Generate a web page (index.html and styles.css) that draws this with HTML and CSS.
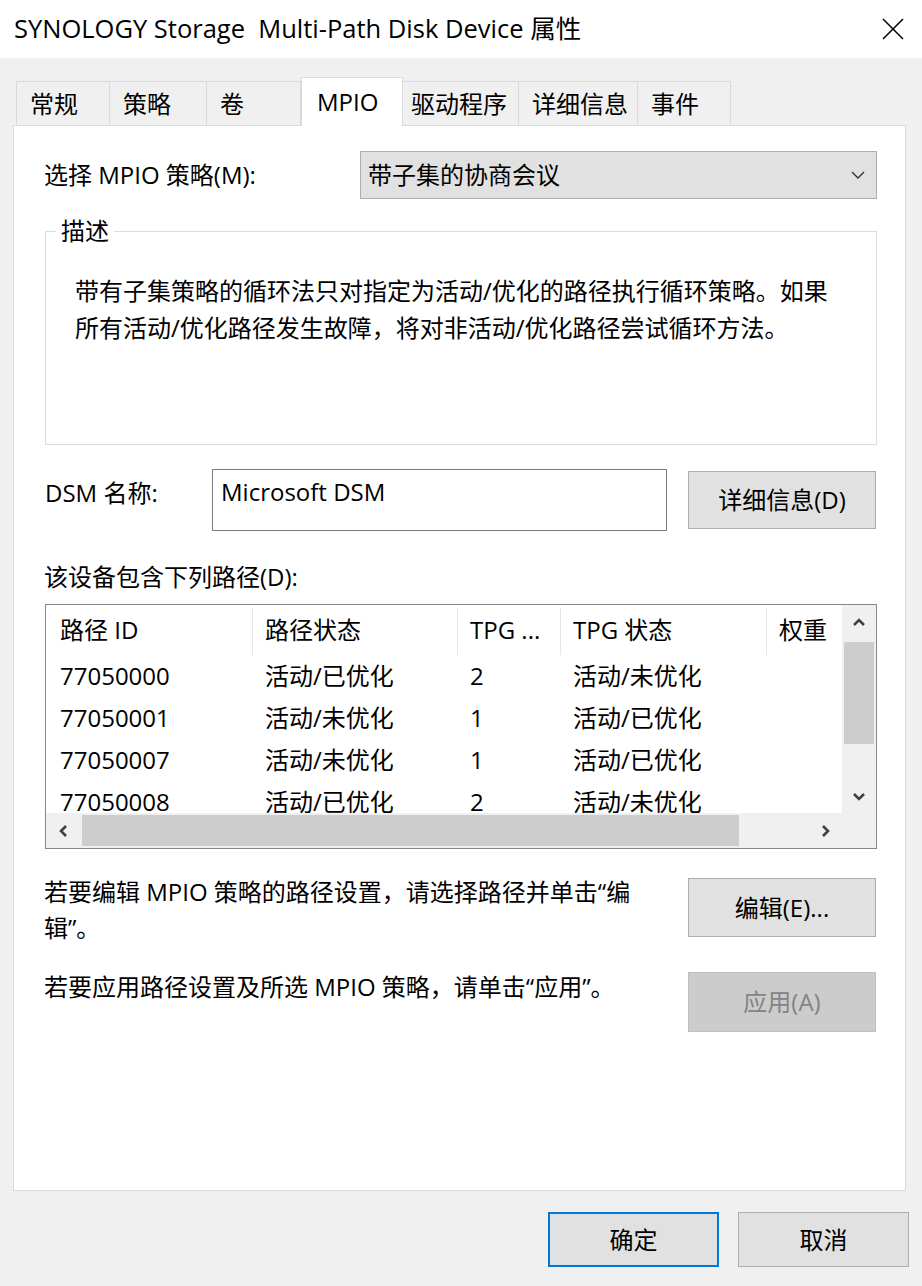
FILE: index.html
```html
<!DOCTYPE html>
<html lang="zh-CN">
<head>
<meta charset="utf-8">
<title>SYNOLOGY Storage Multi-Path Disk Device 属性</title>
<link rel="stylesheet" href="styles.css">
</head>
<body>
<div class="window">
  <header class="titlebar">
    <span class="title">SYNOLOGY Storage&nbsp; Multi-Path Disk Device 属性</span>
    <svg class="close" width="22" height="22" viewBox="0 0 22 22"><path d="M1 1L21 21M21 1L1 21" stroke="#000" stroke-width="1.5" fill="none"/></svg>
  </header>

  <div class="client">
    <nav class="tabs">
      <div class="tab">常规</div>
      <div class="tab">策略</div>
      <div class="tab">卷</div>
      <div class="tab active">MPIO</div>
      <div class="tab tight">驱动程序</div>
      <div class="tab">详细信息</div>
      <div class="tab">事件</div>
    </nav>

    <section class="panel">
      <div class="policy-row">
        <span class="label">选择 MPIO 策略(M):</span>
        <div class="select">
          <span>带子集的协商会议</span>
          <svg width="14" height="8" viewBox="0 0 14 8"><polyline points="1,1 7,7 13,1" fill="none" stroke="#333" stroke-width="1.4"/></svg>
        </div>
      </div>

      <fieldset class="group">
        <legend>描述</legend>
        <p class="desc">带有子集策略的循环法只对指定为活动/优化的路径执行循环策略。如果所有活动/优化路径发生故障，将对非活动/优化路径尝试循环方法。</p>
      </fieldset>

      <div class="dsm-row">
        <span class="label dsm-label">DSM 名称:</span>
        <div class="textbox">Microsoft DSM</div>
        <button class="btn side-btn details-btn">详细信息(D)</button>
      </div>

      <div class="label list-label">该设备包含下列路径(D):</div>

      <div class="listview">
        <div class="lv-main">
          <div class="lv-rows">
            <div class="lv-head">
              <div class="hc">路径 ID</div>
              <div class="hc">路径状态</div>
              <div class="hc">TPG ...</div>
              <div class="hc">TPG 状态</div>
              <div class="hc last">权重</div>
            </div>
            <div class="lv-row"><div>77050000</div><div>活动/已优化</div><div>2</div><div>活动/未优化</div><div></div></div>
            <div class="lv-row"><div>77050001</div><div>活动/未优化</div><div>1</div><div>活动/已优化</div><div></div></div>
            <div class="lv-row"><div>77050007</div><div>活动/未优化</div><div>1</div><div>活动/已优化</div><div></div></div>
            <div class="lv-row"><div>77050008</div><div>活动/已优化</div><div>2</div><div>活动/未优化</div><div></div></div>
          </div>
          <div class="vscroll">
            <div class="arrow"><svg width="14" height="9" viewBox="0 0 14 9"><polyline points="2,7 7,2 12,7" fill="none" stroke="#404040" stroke-width="2.6"/></svg></div>
            <div class="vthumb"></div>
            <div class="spacer"></div>
            <div class="arrow"><svg width="14" height="9" viewBox="0 0 14 9"><polyline points="2,2 7,7 12,2" fill="none" stroke="#404040" stroke-width="2.6"/></svg></div>
          </div>
        </div>
        <div class="hscroll">
          <div class="arrow"><svg width="9" height="14" viewBox="0 0 9 14"><polyline points="7,2 2,7 7,12" fill="none" stroke="#404040" stroke-width="2.6"/></svg></div>
          <div class="hthumb"></div>
          <div class="spacer"></div>
          <div class="arrow"><svg width="9" height="14" viewBox="0 0 9 14"><polyline points="2,2 7,7 2,12" fill="none" stroke="#404040" stroke-width="2.6"/></svg></div>
          <div class="corner"></div>
        </div>
      </div>

      <div class="action-row edit-row">
        <p class="note">若要编辑 MPIO 策略的路径设置，请选择路径并单击“编<br>辑”。</p>
        <button class="btn side-btn edit-btn">编辑(E)...</button>
      </div>

      <div class="action-row apply-row">
        <p class="note">若要应用路径设置及所选 MPIO 策略，请单击“应用”。</p>
        <button class="btn side-btn apply-btn" disabled>应用(A)</button>
      </div>
    </section>
  </div>

  <footer class="footer">
    <button class="btn foot-btn default">确定</button>
    <button class="btn foot-btn">取消</button>
  </footer>
</div>
</body>
</html>
```

FILE: styles.css
```css
* { box-sizing: border-box; }

html, body {
  margin: 0;
  padding: 0;
}

body {
  width: 922px;
  height: 1286px;
  overflow: hidden;
  background: #f0f0f0;
  color: #000;
  font-family: "Open Sans", "Noto Sans CJK SC", sans-serif;
  font-size: 24px;
  line-height: 36px;
}

.titlebar {
  height: 58px;
  background: #fff;
  display: flex;
  align-items: center;
  justify-content: space-between;
  padding: 0 18px 0 14px;
}

.title {
  font-size: 25.5px;
  line-height: 30px;
  margin-top: -2px;
  white-space: nowrap;
}

.client {
  padding-left: 13px;
}

.tabs {
  display: grid;
  grid-template-columns: 94px 97px 94px 102px 116px 119px 93px;
  align-items: end;
  height: 48px;
  margin-top: 19px;
  margin-left: 3px;
}

.tab {
  height: 44px;
  display: flex;
  align-items: center;
  padding-left: 13px;
  background: #f0f0f0;
  border: 1px solid #d9d9d9;
  border-bottom: none;
  border-left: none;
  white-space: nowrap;
}

.tab:first-child {
  border-left: 1px solid #d9d9d9;
}

.tab.tight {
  padding-left: 8px;
}

.tab.active {
  position: relative;
  z-index: 2;
  height: 49px;
  margin-bottom: -1px;
  padding-left: 15px;
  background: #fff;
  border-left: 1px solid #d9d9d9;
}

.panel {
  width: 893px;
  height: 1066px;
  background: #fff;
  border: 1px solid #d9d9d9;
  padding: 25px 28px 0 30px;
}

.label {
  white-space: nowrap;
}

.policy-row {
  display: flex;
  align-items: center;
  justify-content: space-between;
  height: 48px;
}

.select {
  width: 517px;
  height: 48px;
  background: #e1e1e1;
  border: 1px solid #adadad;
  display: flex;
  align-items: center;
  justify-content: space-between;
  padding: 0 11px 0 7px;
}

.group {
  margin: 17px 0 0 1px;
  width: 832px;
  padding: 0;
  border: 1px solid #dcdcdc;
  min-width: 0;
}

.group legend {
  margin-left: 10px;
  padding: 0 5px;
  line-height: 30px;
}

.desc {
  margin: 0;
  height: 198px;
  padding: 26px 29px 0 29px;
  line-height: 37px;
}

.dsm-row {
  display: flex;
  align-items: center;
  height: 62px;
  margin-top: 24px;
}

.dsm-label {
  width: 168px;
  align-self: flex-start;
  margin-top: 6px;
  padding-left: 1px;
}

.textbox {
  width: 455px;
  height: 62px;
  border: 1px solid #7a7a7a;
  padding: 4px 8px;
  align-self: stretch;
}

.btn {
  font-family: inherit;
  font-size: 24px;
  line-height: 30px;
  color: #000;
  background: #e1e1e1;
  border: 1px solid #adadad;
  padding: 0;
  margin: 0;
}

.side-btn {
  width: 188px;
  margin-left: auto;
  margin-right: 1px;
}

.details-btn {
  height: 58px;
}

.list-label {
  margin-top: 28px;
}

.listview {
  margin: 9px 0 0 1px;
  width: 832px;
  height: 245px;
  border: 1px solid #828790;
  display: flex;
  flex-direction: column;
}

.lv-main {
  display: flex;
  height: 208px;
}

.lv-rows {
  flex: 1;
  overflow: hidden;
  background: #fff;
}

.lv-head,
.lv-row {
  display: grid;
  grid-template-columns: 207px 205px 103px 206px 1fr;
  white-space: nowrap;
}

.lv-head {
  height: 50px;
}

.hc {
  margin-top: 3px;
  height: 47px;
  display: flex;
  align-items: center;
  padding-left: 12px;
  padding-bottom: 3px;
  border-right: 1px solid #e5e5e5;
}

.hc:first-child,
.lv-row > div:first-child {
  padding-left: 14px;
}

.hc.last {
  border-right: none;
}

.lv-row {
  height: 42px;
  align-items: center;
}

.lv-row > div {
  padding-left: 12px;
}

.vscroll {
  width: 34px;
  background: #f0f0f0;
  display: flex;
  flex-direction: column;
}

.arrow {
  width: 34px;
  height: 34px;
  flex: none;
  display: flex;
  align-items: center;
  justify-content: center;
}

.vthumb {
  margin: 3px 2px 0 2px;
  height: 102px;
  background: #cdcdcd;
}

.spacer {
  flex: 1;
}

.hscroll {
  height: 35px;
  background: #f0f0f0;
  display: flex;
  align-items: stretch;
}

.hscroll .arrow {
  height: 35px;
}

.hthumb {
  margin: 2px 0 2px 2px;
  width: 657px;
  background: #cdcdcd;
}

.corner {
  width: 34px;
}

.action-row {
  display: flex;
  align-items: flex-start;
}

.note {
  margin: 0;
  line-height: 36px;
  white-space: nowrap;
}

.edit-row {
  margin-top: 25px;
}

.edit-btn {
  margin-top: 4px;
  height: 59px;
}

.apply-row {
  margin-top: 23px;
}

.apply-btn {
  margin-top: 3px;
  height: 60px;
  background: #cccccc;
  border-color: #bfbfbf;
  color: #838383;
}

.footer {
  display: flex;
  justify-content: flex-end;
  gap: 19px;
  padding-right: 13px;
  margin-top: 21px;
}

.foot-btn {
  width: 171px;
  height: 55px;
}

.foot-btn.default {
  border: 2px solid #0078d7;
}
```
